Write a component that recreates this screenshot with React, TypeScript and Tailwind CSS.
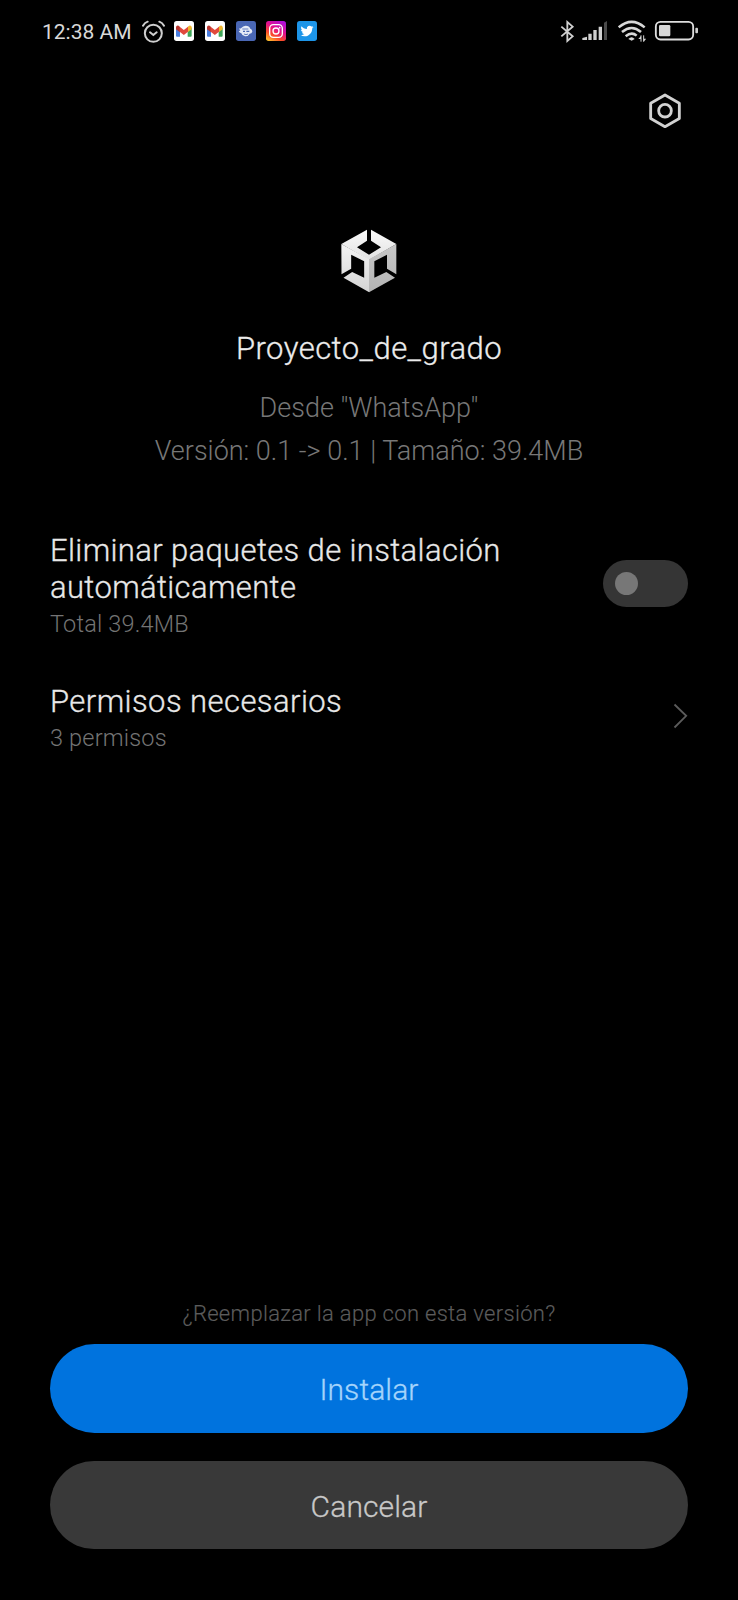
import React from "react";

function GmailIcon() {
  return (
    <svg width="20" height="20" viewBox="0 0 60 60">
      <rect width="60" height="60" rx="8" fill="#fff" />
      <path d="M6 20v24q0 3 3 3h9V28z" fill="#4a7fe0" />
      <path d="M53 20v24q0 3-3 3h-9V28z" fill="#3fa65a" />
      <path d="M41 18l4-4q7-3 8 5v6L41 34z" fill="#f2b62c" />
      <path d="M18 18l-4-4q-7-3-8 5v6l12 9z" fill="#b9362f" />
      <path d="M17 17l12.500 10L42 17v15L29.500 42 17 32z" fill="#e0483c" />
    </svg>
  );
}

function StatusBar() {
  return (
    <header className="flex h-16 items-start pl-[42px] pr-[39px] pt-5">
      <span className="w-[99px] whitespace-nowrap text-[21px] font-normal leading-6 text-[#d8d8d8]">12:38 AM</span>
      <svg className="ml-px" width="23" height="24" viewBox="0 0 69 72" fill="none" stroke="#cfcfcf" strokeWidth="6" strokeLinecap="round">
        <circle cx="34" cy="40" r="25.5" />
        <path d="M24 37l10 8 10-8" />
        <path d="M3 17q5-9 14-12M52 5q9 3 14 12" />
      </svg>
      <div className="ml-[9px] mt-px flex gap-[10.8px]">
        <GmailIcon />
        <GmailIcon />
        <svg width="20" height="20" viewBox="0 0 60 60">
          <rect width="60" height="60" rx="8" fill="#4a67b4" />
          <path d="M15 22q6-8 14-8 11 0 14 9 6 2 6 9-2 6-8 6-5 9-14 8-9-1-11-9-6-1-8-6 4-1 5-3-3-2-4-6 4 1 6 0z" fill="#e6ebf6" />
          <path d="M19 24h18M24 39q6 4 12 0" stroke="#4a67b4" strokeWidth="2.5" fill="none" />
          <path d="M21 29h6v4h-6zM31 29h9v4h-9z" fill="#4a67b4" />
        </svg>
        <svg width="20" height="20" viewBox="0 0 60 60">
          <defs>
            <linearGradient id="ig" x1="0.15" y1="1" x2="0.75" y2="0">
              <stop offset="0" stopColor="#ffc02e" />
              <stop offset="0.3" stopColor="#fb4b28" />
              <stop offset="0.6" stopColor="#e3128a" />
              <stop offset="1" stopColor="#b010d8" />
            </linearGradient>
          </defs>
          <rect width="60" height="60" rx="8" fill="url(#ig)" />
          <g fill="none" stroke="#fff" strokeWidth="4">
            <rect x="11" y="11" width="38" height="38" rx="11" />
            <circle cx="30" cy="30" r="9" />
          </g>
          <circle cx="41" cy="20" r="2.5" fill="#fff" />
        </svg>
        <svg width="20" height="20" viewBox="0 0 60 60">
          <rect width="60" height="60" rx="8" fill="#1d95e8" />
          <path transform="translate(10.5 10.5) scale(1.63)" fill="#fff" d="M23.95 4.57a10 10 0 0 1-2.82.77 4.96 4.96 0 0 0 2.16-2.72c-.95.55-2 .95-3.13 1.18a4.92 4.92 0 0 0-8.38 4.48C7.69 8.1 4.07 6.13 1.64 3.16a4.93 4.93 0 0 0 1.52 6.57 4.9 4.9 0 0 1-2.23-.61v.06c0 2.38 1.7 4.37 3.95 4.82a5 5 0 0 1-2.21.09 4.94 4.94 0 0 0 4.6 3.42A9.87 9.87 0 0 1 0 19.54a14 14 0 0 0 7.55 2.21c9.05 0 14-7.5 14-13.98 0-.21 0-.42-.02-.63a9.94 9.94 0 0 0 2.46-2.55z" />
        </svg>
      </div>
      <div className="ml-auto flex">
        <svg width="17" height="24" viewBox="0 0 51 72" fill="none" stroke="#d0d0d0" strokeWidth="5.5">
          <path d="M4 20l34 29-16 14V6l16 14L4 49" />
        </svg>
        <svg className="ml-[5px]" width="28" height="24" viewBox="0 0 84 72" fill="#d0d0d0">
          <path d="M1 60v-6l14-4v10zM19 60V41h10v19zM34 60V30h10v30zM50 60V20h10v40z" />
          <path d="M66 60V8l9-5v57z" fill="#4a4a4a" />
        </svg>
        <svg className="ml-2" width="28" height="24" viewBox="0 0 84 72" fill="none" stroke="#d8d8d8" strokeWidth="7.5">
          <path d="M2 22Q41-11 80 22" />
          <path d="M12 36Q41 12 69 36" />
          <path d="M23 49Q41 34 56 47" />
          <path d="M31 57q10-10 19 0l-9 5z" fill="#d8d8d8" stroke="none" />
          <path d="M69 46v19M77 46v19" strokeWidth="3" />
          <path d="M61 57l8-9v9zM77 65l8-9h-8z" fill="#d8d8d8" stroke="none" />
        </svg>
        <svg className="ml-[7px]" width="46" height="24" viewBox="0 0 138 72">
          <rect x="8.500" y="5.500" width="112" height="53" rx="14" fill="none" stroke="#dedede" strokeWidth="5.500" />
          <rect x="18" y="15" width="34" height="34" rx="4" fill="#d8d8d8" />
          <rect x="127" y="23" width="8" height="17" rx="3" fill="#d0d0d0" />
        </svg>
      </div>
    </header>
  );
}

function UnityLogo() {
  return (
    <svg width="100" height="90" viewBox="-2 0 300 270">
      <defs>
        <linearGradient id="topFace" x1="0" y1="0" x2="0" y2="1">
          <stop offset="0" stopColor="#fafafa" />
          <stop offset="1" stopColor="#e2e2e2" />
        </linearGradient>
        <linearGradient id="leftFace" x1="0" y1="0" x2="0" y2="1">
          <stop offset="0" stopColor="#f4f4f4" />
          <stop offset="1" stopColor="#d4d4d4" />
        </linearGradient>
        <linearGradient id="rightFace" x1="0" y1="0" x2="0" y2="1">
          <stop offset="0" stopColor="#c8c8c8" />
          <stop offset="1" stopColor="#b4b4b4" />
        </linearGradient>
      </defs>
      <path d="M142 44v33l-30 20 36 22 36-22-30-20V44l76 43-82 48-83-48z" fill="url(#topFace)" />
      <path d="M65 87l83.500 46v99l-77-44 26-17 36 17v-49l-39-20v42l-29 17z" fill="url(#leftFace)" />
      <path d="M230 87l-82 46v99l78-44-26-17-36 17v-49l38-20v42l28 17z" fill="url(#rightFace)" />
    </svg>
  );
}

export default function App() {
  return (
    <main className="flex h-[1600px] w-[738px] flex-col overflow-hidden bg-black font-['Roboto',sans-serif] font-light">
      <StatusBar />
      <div className="flex h-[151px] justify-end pr-[55px] pt-7">
        <svg width="36" height="38" viewBox="0 0 108 114" fill="none" stroke="#d2d2d2" strokeWidth="8.500" strokeLinejoin="round">
          <path d="M54 9l43 24.500v46L54 104 11 79.500v-46z" />
          <circle cx="54" cy="56" r="19" />
        </svg>
      </div>
      <section className="flex flex-col items-center text-center">
        <UnityLogo />
        <h1 className="mt-6 text-[31px] leading-10 tracking-[0.46px] text-[#ececec] [-webkit-text-stroke:0.3px]">Proyecto_de_grado</h1>
        <p className="mt-[18px] text-[27px] leading-[43px] text-[#777]">
          Desde "WhatsApp"
          <br />
          Versión: 0.1 -&gt; 0.1 | Tamaño: 39.4MB
        </p>
      </section>
      <section className="mt-[59px] flex items-center justify-between px-[50px]">
        <div>
          <h2 className="w-[500px] text-[31px] leading-[37px] tracking-[0.36px] text-[#e8e8e8] [-webkit-text-stroke:0.3px]">Eliminar paquetes de instalación automáticamente</h2>
          <p className="mt-1 text-[23.5px] leading-7 tracking-[0.18px] text-[#747474]">Total 39.4MB</p>
        </div>
        <div className="mb-[3px] flex h-[47px] w-[85px] items-center rounded-full bg-[#353535] pl-3">
          <div className="size-[23px] rounded-full bg-[#777]" />
        </div>
      </section>
      <section className="mt-[45px] flex items-center justify-between px-[50px]">
        <div>
          <h2 className="text-[31px] leading-[37px] tracking-[0.43px] text-[#e8e8e8] [-webkit-text-stroke:0.3px]">Permisos necesarios</h2>
          <p className="mt-1 text-[23.5px] leading-7 tracking-[0.18px] text-[#747474]">3 permisos</p>
        </div>
        <svg className="mb-[3px]" width="16" height="26" viewBox="0 0 16 26" fill="none" stroke="#5c5c5c" strokeWidth="1.800">
          <path d="M2.500 1.500l11.700 11.300L2.500 24.500" />
        </svg>
      </section>
      <footer className="mt-auto flex flex-col px-[50.400px] pb-[51px] text-center">
        <p className="text-[22px] leading-7 tracking-[0.31px] text-[#5c5c5c] [-webkit-text-stroke:0.15px]">¿Reemplazar la app con esta versión?</p>
        <button className="mt-4 h-[89px] rounded-full bg-[#0073de] pt-0.5 text-[30px] tracking-[0.1px] text-[#a5d4fb] [-webkit-text-stroke:0.3px]">Instalar</button>
        <button className="mt-7 h-[88px] rounded-full bg-[#393939] pt-[3px] text-[30px] tracking-[0.1px] text-[#c8c8c8] [-webkit-text-stroke:0.3px]">Cancelar</button>
      </footer>
    </main>
  );
}
